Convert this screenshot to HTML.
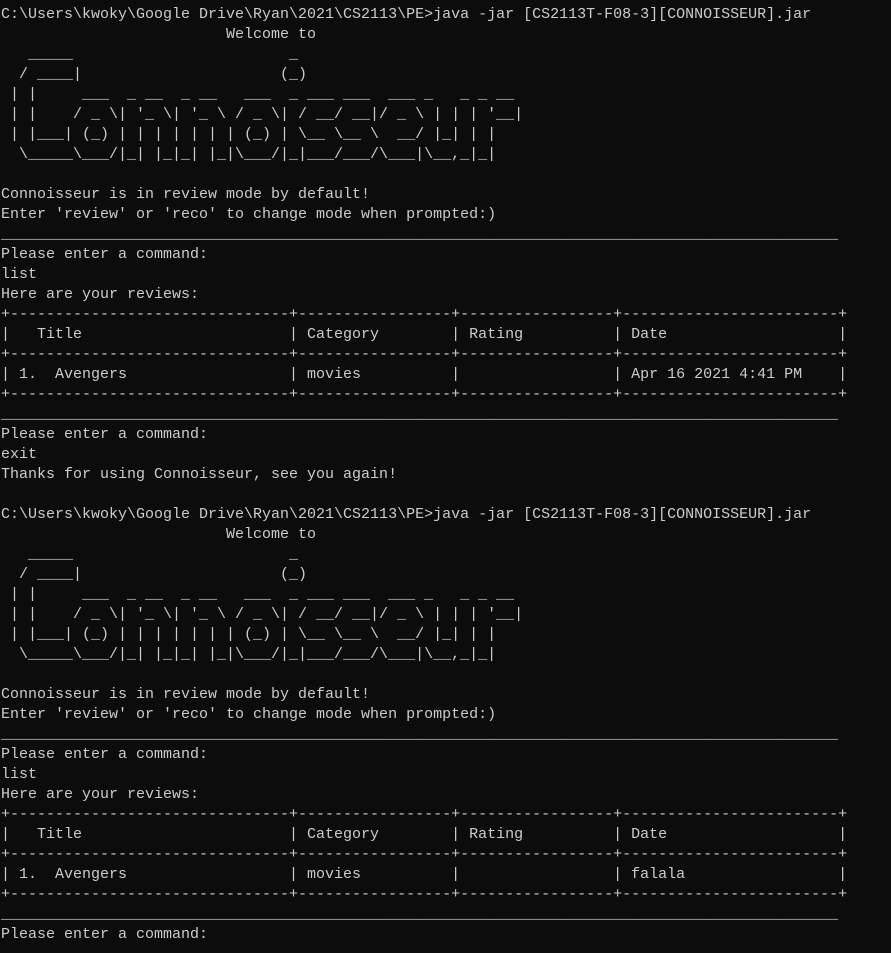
<!DOCTYPE html>
<html><head><meta charset="utf-8"><style>
html,body{margin:0;padding:0;background:#0c0c0c;width:891px;height:953px;overflow:hidden}
pre{margin:0;padding:5px 0 0 1px;font-family:"Liberation Mono",monospace;font-size:15px;line-height:20px;color:#cccccc;white-space:pre}
</style></head><body><pre>C:\Users\kwoky\Google Drive\Ryan\2021\CS2113\PE&gt;java -jar [CS2113T-F08-3][CONNOISSEUR].jar
                         Welcome to
   _____                        _
  / ____|                      (_)
 | |     ___  _ __  _ __   ___  _ ___ ___  ___ _   _ _ __
 | |    / _ \| '_ \| '_ \ / _ \| / __/ __|/ _ \ | | | '__|
 | |___| (_) | | | | | | | (_) | \__ \__ \  __/ |_| | |
  \_____\___/|_| |_|_| |_|\___/|_|___/___/\___|\__,_|_|

Connoisseur is in review mode by default!
Enter 'review' or 'reco' to change mode when prompted:)
_____________________________________________________________________________________________
Please enter a command:
list
Here are your reviews:
+-------------------------------+-----------------+-----------------+------------------------+
|   Title                       | Category        | Rating          | Date                   |
+-------------------------------+-----------------+-----------------+------------------------+
| 1.  Avengers                  | movies          |                 | Apr 16 2021 4:41 PM    |
+-------------------------------+-----------------+-----------------+------------------------+
_____________________________________________________________________________________________
Please enter a command:
exit
Thanks for using Connoisseur, see you again!

C:\Users\kwoky\Google Drive\Ryan\2021\CS2113\PE&gt;java -jar [CS2113T-F08-3][CONNOISSEUR].jar
                         Welcome to
   _____                        _
  / ____|                      (_)
 | |     ___  _ __  _ __   ___  _ ___ ___  ___ _   _ _ __
 | |    / _ \| '_ \| '_ \ / _ \| / __/ __|/ _ \ | | | '__|
 | |___| (_) | | | | | | | (_) | \__ \__ \  __/ |_| | |
  \_____\___/|_| |_|_| |_|\___/|_|___/___/\___|\__,_|_|

Connoisseur is in review mode by default!
Enter 'review' or 'reco' to change mode when prompted:)
_____________________________________________________________________________________________
Please enter a command:
list
Here are your reviews:
+-------------------------------+-----------------+-----------------+------------------------+
|   Title                       | Category        | Rating          | Date                   |
+-------------------------------+-----------------+-----------------+------------------------+
| 1.  Avengers                  | movies          |                 | falala                 |
+-------------------------------+-----------------+-----------------+------------------------+
_____________________________________________________________________________________________
Please enter a command:
</pre></body></html>
